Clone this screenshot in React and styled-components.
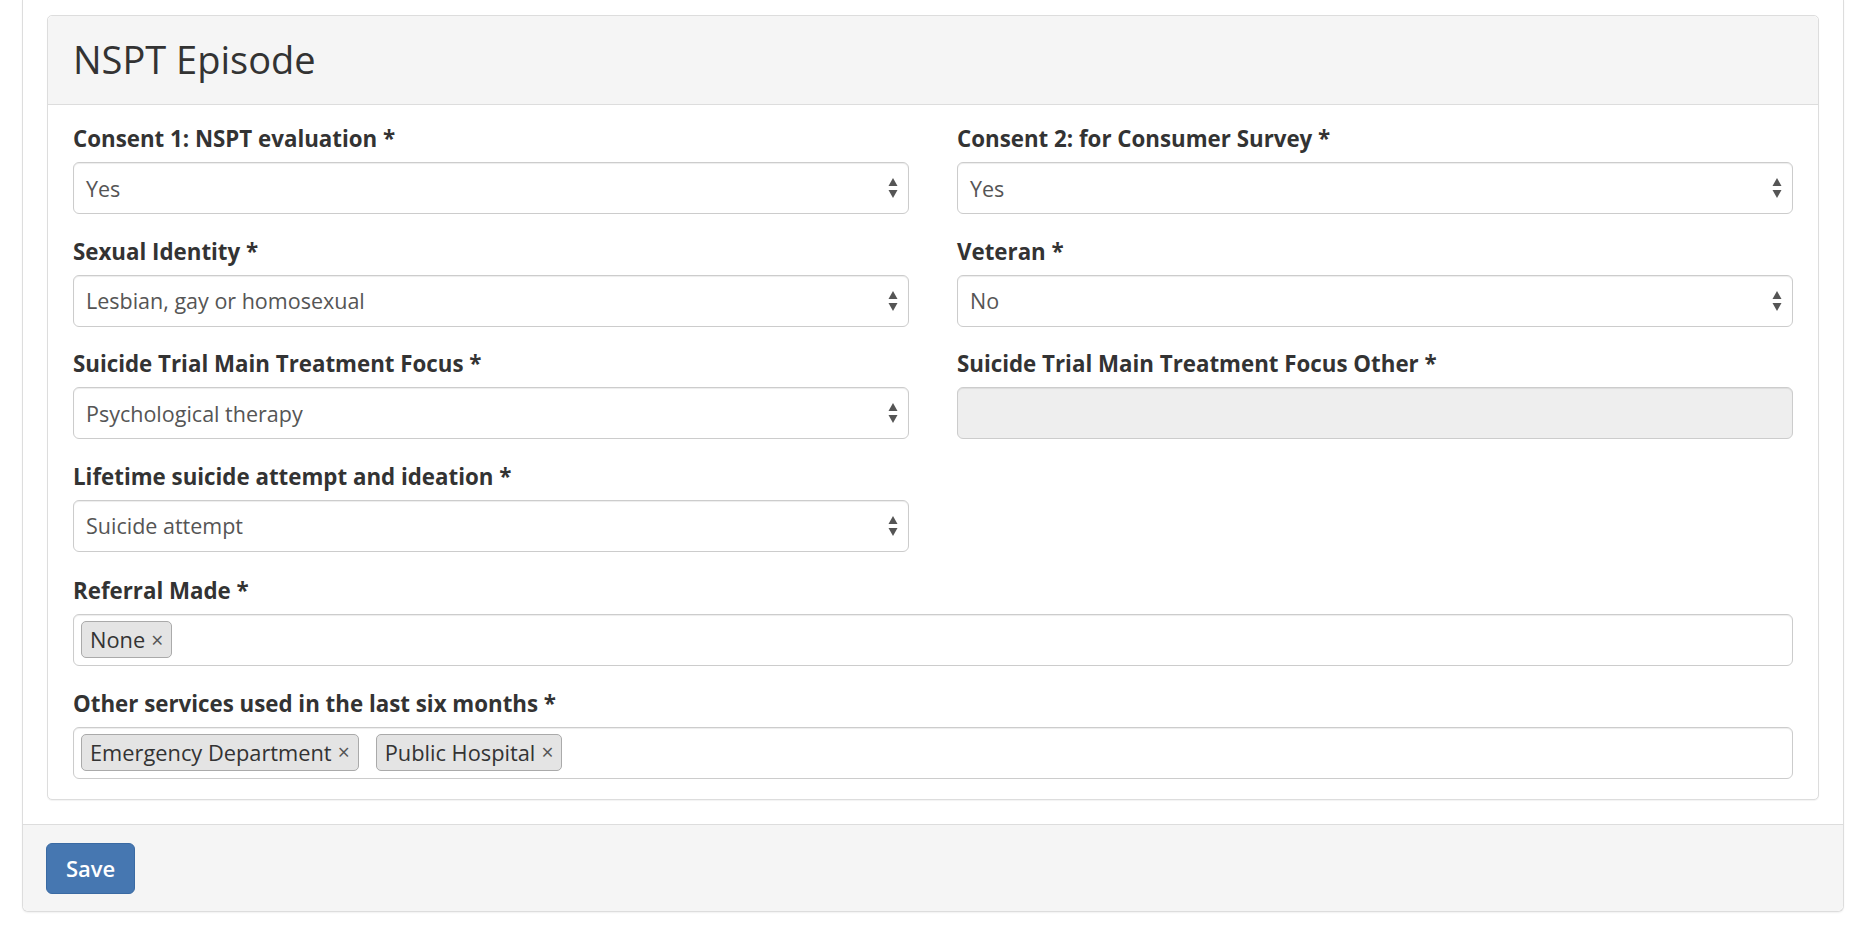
import React from 'react';
import styled, { createGlobalStyle } from 'styled-components';

const GlobalStyle = createGlobalStyle`
  html, body {
    margin: 0;
    padding: 0;
    background: #fff;
  }
  body {
    font-family: "Open Sans", "Liberation Sans", Arial, sans-serif;
    color: #333;
  }
`;

const Arrows = () => (
  <svg width="10" height="22" viewBox="0 0 10 22">
    <polygon points="5,1 9.5,9 0.5,9" fill="#555" />
    <polygon points="0.5,13 9.5,13 5,21" fill="#555" />
  </svg>
);

const fields = [
  [
    { label: 'Consent 1: NSPT evaluation *', value: 'Yes', kind: 'select' },
    { label: 'Consent 2: for Consumer Survey *', value: 'Yes', kind: 'select' },
  ],
  [
    { label: 'Sexual Identity *', value: 'Lesbian, gay or homosexual', kind: 'select' },
    { label: 'Veteran *', value: 'No', kind: 'select' },
  ],
  [
    { label: 'Suicide Trial Main Treatment Focus *', value: 'Psychological therapy', kind: 'select' },
    { label: 'Suicide Trial Main Treatment Focus Other *', kind: 'disabled' },
  ],
  [{ label: 'Lifetime suicide attempt and ideation *', value: 'Suicide attempt', kind: 'select' }],
];

const tagFields = [
  { label: 'Referral Made *', tags: ['None'] },
  { label: 'Other services used in the last six months *', tags: ['Emergency Department', 'Public Hospital'] },
];

const Field = ({ field }) => (
  <FormGroup>
    <Label>{field.label}</Label>
    {field.kind === 'select' ? (
      <Select>
        <span>{field.value}</span>
        <Arrows />
      </Select>
    ) : (
      <Input disabled />
    )}
  </FormGroup>
);

export default function App() {
  return (
    <>
      <GlobalStyle />
      <Page>
        <OuterPanel>
          <OuterBody>
            <Panel>
              <PanelHeading>
                <Title>NSPT Episode</Title>
              </PanelHeading>
              <PanelBody>
                <Grid>
                  {fields.map((row, i) => (
                    <Row key={i}>
                      {row.map((f) => (
                        <Field key={f.label} field={f} />
                      ))}
                    </Row>
                  ))}
                </Grid>
                {tagFields.map((f) => (
                  <FormGroup key={f.label}>
                    <Label>{f.label}</Label>
                    <TagBox>
                      {f.tags.map((t) => (
                        <Tag key={t}>
                          {t}
                          <Remove>×</Remove>
                        </Tag>
                      ))}
                    </TagBox>
                  </FormGroup>
                ))}
              </PanelBody>
            </Panel>
          </OuterBody>
          <Footer>
            <SaveButton>Save</SaveButton>
          </Footer>
        </OuterPanel>
      </Page>
    </>
  );
}

const Page = styled.div`
  padding: 0 18px 18px 22px;
`;

const OuterPanel = styled.section`
  border: 1px solid #ddd;
  border-top: none;
  border-radius: 0 0 6px 6px;
  box-shadow: 0 1px 2px rgba(0, 0, 0, 0.06);
  background: #fff;
`;

const OuterBody = styled.div`
  padding: 15px 24px 24px;
`;

const Panel = styled.article`
  border: 1px solid #ddd;
  border-radius: 5px;
  box-shadow: 0 1px 1px rgba(0, 0, 0, 0.05);
  background: #fff;
`;

const PanelHeading = styled.header`
  background: #f5f5f5;
  border-bottom: 1px solid #ddd;
  border-radius: 5px 5px 0 0;
  height: 88px;
  display: flex;
  align-items: center;
  padding: 0 25px;
`;

const Title = styled.h3`
  margin: 0;
  font-size: 38px;
  font-weight: 400;
  line-height: 1.1;
  color: #333;
`;

const PanelBody = styled.div`
  padding: 18px 25px 0 25px;
`;

const Grid = styled.div`
  margin-bottom: 3.5px;
`;

const Row = styled.div`
  display: grid;
  grid-template-columns: 1fr 1fr;
  column-gap: 48px;
`;

const FormGroup = styled.div`
  display: flex;
  flex-direction: column;
  margin-bottom: 21.5px;

  &:last-child {
    margin-bottom: 20px;
  }
`;

const Label = styled.label`
  font-size: 22.3px;
  font-weight: 700;
  line-height: 31px;
  margin-bottom: 8px;
  color: #333;
`;

const Select = styled.div`
  height: 52px;
  box-sizing: border-box;
  border: 1px solid #ccc;
  border-radius: 6px;
  box-shadow: inset 0 1px 1px rgba(0, 0, 0, 0.075);
  display: flex;
  align-items: center;
  justify-content: space-between;
  padding: 0 10px 0 12px;
  font-size: 21.5px;
  color: #555;
  background: #fff;
`;

const Input = styled.input`
  height: 52px;
  box-sizing: border-box;
  border: 1px solid #ccc;
  border-radius: 6px;
  box-shadow: inset 0 1px 1px rgba(0, 0, 0, 0.075);
  background: #eee;
  font-size: 21.5px;
  font-family: inherit;
`;

const TagBox = styled.div`
  height: 52px;
  box-sizing: border-box;
  border: 1px solid #ccc;
  border-radius: 6px;
  box-shadow: inset 0 1px 1px rgba(0, 0, 0, 0.075);
  display: flex;
  align-items: flex-start;
  gap: 17px;
  padding: 6px 7px;
  background: #fff;
`;

const Tag = styled.span`
  display: inline-flex;
  align-items: center;
  height: 37px;
  box-sizing: border-box;
  padding: 0 8px 0 8px;
  background: #e4e4e4;
  border: 1px solid #aaa;
  border-radius: 5px;
  font-size: 21.8px;
  color: #333;
`;

const Remove = styled.span`
  margin-left: 6px;
  font-size: 21px;
  color: #555;
`;

const Footer = styled.footer`
  background: #f5f5f5;
  border-top: 1px solid #ddd;
  border-radius: 0 0 6px 6px;
  padding: 18px 23px 17px;
`;

const SaveButton = styled.button`
  height: 51px;
  padding: 0 19px;
  font-family: inherit;
  font-size: 22px;
  font-weight: 600;
  color: #fff;
  background: #4677b1;
  border: 1px solid #3a6aa3;
  border-radius: 6px;
`;
